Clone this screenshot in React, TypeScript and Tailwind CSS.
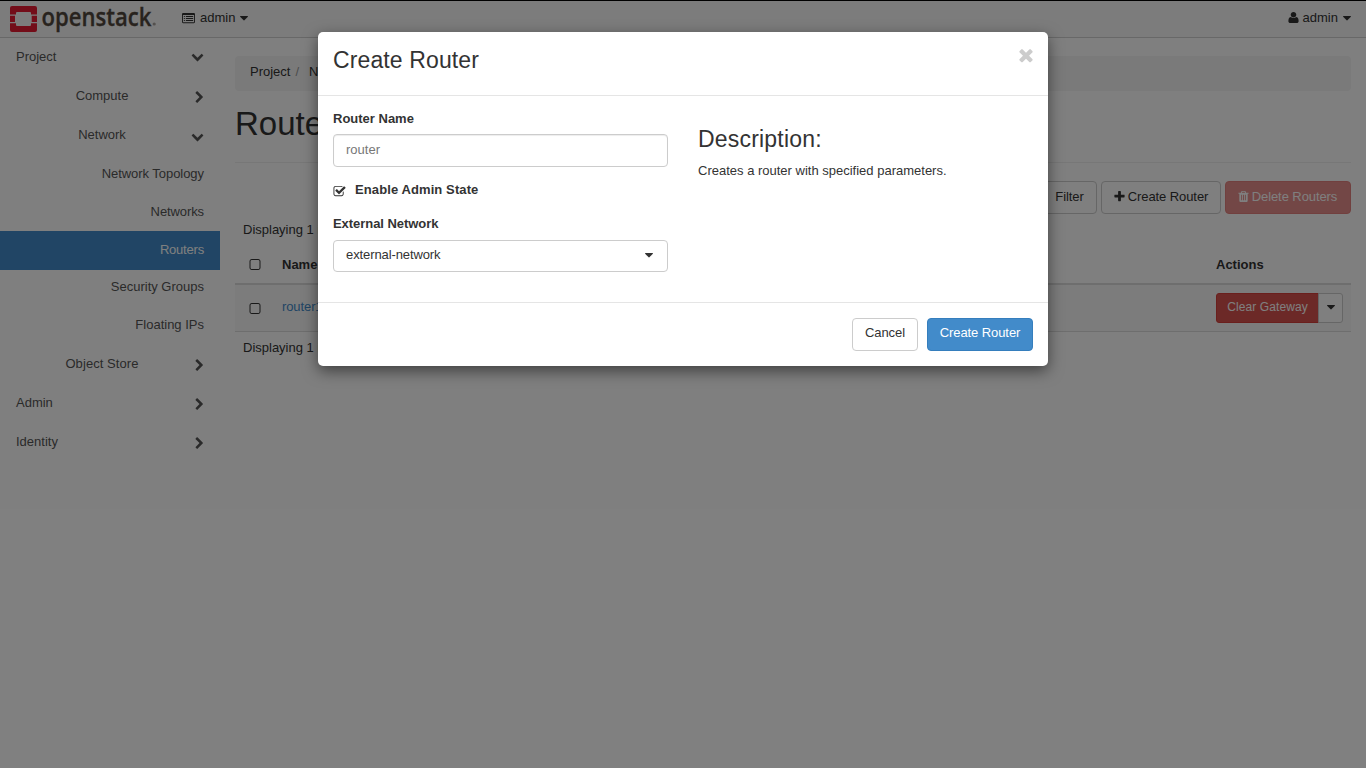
import React from "react";

const ICONS = {
  chevronDown:
    "M1683 808l-742 741q-19 19-45 19t-45-19l-742-741q-19-19-19-45.500t19-45.500l166-165q19-19 45-19t45 19l531 531 531-531q19-19 45-19t45 19l166 165q19 19 19 45.500t-19 45.500z",
  chevronRight:
    "M1363 877l-742 742q-19 19-45 19t-45-19l-166-166q-19-19-19-45t19-45l531-531-531-531q-19-19-19-45t19-45l166-166q19-19 45-19t45 19l742 742q19 19 19 45t-19 45z",
  times:
    "M1490 1322q0 40-28 68l-136 136q-28 28-68 28t-68-28l-294-294-294 294q-28 28-68 28t-68-28l-136-136q-28-28-28-68t28-68l294-294-294-294q-28-28-28-68t28-68l136-136q28-28 68-28t68 28l294 294 294-294q28-28 68-28t68 28l136 136q28 28 28 68t-28 68l-294 294 294 294q28 28 28 68z",
  plus: "M1600 736v192q0 40-28 68t-68 28h-416v416q0 40-28 68t-68 28h-192q-40 0-68-28t-28-68v-416h-416q-40 0-68-28t-28-68v-192q0-40 28-68t68-28h416v-416q0-40 28-68t68-28h192q40 0 68 28t28 68v416h416q40 0 68 28t28 68z",
  trash:
    "M704 1376v-704q0-14-9-23t-23-9h-64q-14 0-23 9t-9 23v704q0 14 9 23t23 9h64q14 0 23-9t9-23zm256 0v-704q0-14-9-23t-23-9h-64q-14 0-23 9t-9 23v704q0 14 9 23t23 9h64q14 0 23-9t9-23zm256 0v-704q0-14-9-23t-23-9h-64q-14 0-23 9t-9 23v704q0 14 9 23t23 9h64q14 0 23-9t9-23zm-544-992h448l-48-117q-7-9-17-11h-317q-10 2-17 11zm928 32v64q0 14-9 23t-23 9h-96v948q0 83-47 143.500t-113 60.500h-832q-66 0-113-58.500t-47-141.500v-952h-96q-14 0-23-9t-9-23v-64q0-14 9-23t23-9h309l70-167q15-37 54-63t79-26h320q40 0 79 26t54 63l70 167h309q14 0 23 9t9 23z",
  user: "M1600 1405q0 120-73 189.500t-194 69.500h-874q-121 0-194-69.500t-73-189.500q0-53 3.500-103.500t14-109 26.500-108.500 43-97.500 62-81 85.500-53.500 111.500-20q9 0 42 21.500t74.500 48 108 48 133.500 21.500 133.500-21.500 108-48 74.500-48 42-21.500q61 0 111.500 20t85.500 53.500 62 81 43 97.500 26.500 108.500 14 109 3.500 103.500zm-320-893q0 159-112.500 271.500t-271.500 112.500-271.500-112.500-112.500-271.500 112.500-271.500 271.500-112.500 271.500 112.500 112.500 271.500z",
  square:
    "M1312 256h-832q-66 0-113 47t-47 113v832q0 66 47 113t113 47h832q66 0 113-47t47-113v-832q0-66-47-113t-113-47zm288 160v832q0 119-84.500 203.500t-203.500 84.500h-832q-119 0-203.500-84.500t-84.500-203.500v-832q0-119 84.500-203.500t203.500-84.500h832q119 0 203.500 84.500t84.500 203.500z",
  checkSquare:
    "M1472 930v318q0 119-84.500 203.500t-203.500 84.500h-832q-119 0-203.500-84.500t-84.500-203.500v-832q0-119 84.500-203.500t203.500-84.500h832q63 0 117 25 15 7 18 23 3 17-9 29l-49 49q-10 10-23 10-3 0-9-2-23-6-45-6h-832q-66 0-113 47t-47 113v832q0 66 47 113t113 47h832q66 0 113-47t47-113v-254q0-13 9-22l64-64q10-10 23-10 6 0 12 3 20 8 20 29zm231-489l-814 814q-24 24-57 24t-57-24l-430-430q-24-24-24-57t24-57l110-110q24-24 57-24t57 24l263 263 647-647q24-24 57-24t57 24l110 110q24 24 24 57t-24 57z",
  caret:
    "M1408 704q0 26-19 45l-448 448q-19 19-45 19t-45-19l-448-448q-19-19-19-45t19-45 45-19h896q26 0 45 19t19 45z",
  list: "M160 128h1472a160 160 0 0 1 160 160v1088a160 160 0 0 1-160 160H160a160 160 0 0 1-160-160V288a160 160 0 0 1 160-160zM128 420v956q0 32 32 32h1472q32 0 32-32V420zM256 550h138v138H256zM532 550h1004v138H532zM256 826h138v138H256zM532 826h1004v138H532zM256 1102h138v138H256zM532 1102h1004v138H532z",
};

function Icon({ name, className }: { name: keyof typeof ICONS; className: string }) {
  return (
    <svg viewBox="0 0 1792 1792" fill="currentColor" fillRule="evenodd" className={`shrink-0 ${className}`}>
      <path d={ICONS[name]} />
    </svg>
  );
}

function Logo() {
  return (
    <svg width="152" height="34" viewBox="0 0 152 34" className="mt-[2px] ml-2 shrink-0">
      <path
        fill="#e61a33"
        d="M4 4h23a2 2 0 0 1 2 2V12.500h-6V11a1 1 0 0 0-1-1h-13a1 1 0 0 0-1 1v1.500H2V6A2 2 0 0 1 4 4zM2 13.700h5v6.300H2zM23.700 13.700H29v6.300h-5.300zM2 21.200h6v1.800a1 1 0 0 0 1 1h13a1 1 0 0 0 1-1v-1.800H29v6.800a2 2 0 0 1-2 2h-23A2 2 0 0 1 2 28z"
      />
      <text x="33.500" y="24" fill="#51473d" stroke="#51473d" strokeWidth="0.300" fontFamily="'Open Sans', 'Noto Sans', sans-serif" fontSize="25" fontWeight="600" textLength="110" lengthAdjust="spacingAndGlyphs">
        openstack
      </text>
      <circle cx="146.200" cy="22" r="1.600" fill="#a8a39e" />
    </svg>
  );
}

type NavRow = { label: string; row: string; level: 1 | 2 | 3; open?: boolean };

const NAV: NavRow[] = [
  { label: "Project", row: "h-[38px] [&_svg]:-mt-[2px] [&_svg]:mb-[2px]", level: 1, open: true },
  { label: "Compute", row: "h-[39px]", level: 2 },
  { label: "Network", row: "h-[39px]", level: 2, open: true },
  { label: "Network Topology", row: "h-[39px] tracking-[-0.05px]", level: 3 },
  { label: "Networks", row: "h-[38px] tracking-[-0.1px]", level: 3 },
  { label: "Routers", row: "h-[39px] bg-[#428bca] pb-[2px] tracking-[-0.2px] text-white", level: 3 },
  { label: "Security Groups", row: "h-[36px] pb-[2px]", level: 3 },
  { label: "Floating IPs", row: "h-[38px]", level: 3 },
  { label: "Object Store", row: "h-[39px] tracking-[0.07px]", level: 2 },
  { label: "Admin", row: "h-[39px]", level: 1 },
  { label: "Identity", row: "h-[39px]", level: 1 },
];

const LEVEL = { 1: "pl-4 text-left", 2: "pl-3 text-center", 3: "pr-4 text-right" };

function Sidebar() {
  return (
    <nav className="w-[220px] shrink-0 text-[#555]">
      {NAV.map((r) => (
        <a key={r.label} className={`flex items-center ${r.row}`}>
          <span className={`flex-1 ${LEVEL[r.level]}`}>{r.label}</span>
          {r.level < 3 && (
            <span className="mr-4 flex w-3 justify-end pt-[3px]">
              <Icon name={r.open ? "chevronDown" : "chevronRight"} className={r.open ? "size-[13px]" : "-mr-[2px] size-[13px]"} />
            </span>
          )}
        </a>
      ))}
    </nav>
  );
}

const BTN = "flex h-[33px] items-center justify-center rounded border whitespace-nowrap tracking-[-0.08px]";

function Main() {
  return (
    <main className="ml-[15px] w-[1116px] pt-[18px]">
      <ol className="flex h-[35px] items-center rounded bg-[#f5f5f5] px-[15px] pb-[3px]">
        <li>Project</li>
        <li className="px-[5px] text-[#999]">/</li>
        <li className="pl-[5px]">Network</li>
        <li className="px-[5px] text-[#999]">/</li>
        <li className="pl-[5px]">Routers</li>
      </ol>
      <h1 className="mt-[14px] h-[58px] border-b border-[#eee] text-[33px] leading-[38px]">Routers</h1>
      <div className="mt-[18px] flex justify-end gap-1">
        <button className={`${BTN} w-[54px] border-[#ccc] pr-px pb-[2px]`}>Filter</button>
        <button className={`${BTN} w-[120px] border-[#ccc] pr-px pb-[2px]`}>
          <Icon name="plus" className="mr-[2px] size-[13px]" />
          Create Router
        </button>
        <button className={`${BTN} w-[126px] border-[#d43f3a] bg-[#d9534f] pr-[2px] pb-[2px] text-white opacity-65`}>
          <Icon name="trash" className="mr-[2px] size-[13px]" />
          Delete Routers
        </button>
      </div>
      <div className="flex h-[32px] items-center px-2">Displaying 1 item</div>
      <div className="flex h-[39px] items-center border-b-2 border-[#ddd] font-bold">
        <Icon name="square" className="mt-px ml-[13px] size-[14px]" />
        <span className="ml-5 flex-1">Name</span>
        <span className="w-[135px]">Actions</span>
      </div>
      <div className="flex h-[47px] items-center border-b border-[#ddd] bg-[#f9f9f9]">
        <Icon name="square" className="mt-px ml-[13px] size-[14px]" />
        <span className="ml-5 flex-1 pb-[2px] tracking-[-0.1px] text-[#428bca]">router1</span>
        <div className="flex w-[135px]">
          <button className="h-[30px] w-[103px] rounded-l-[3px] border border-[#d43f3a] bg-[#d9534f] pb-[2px] text-xs tracking-[0.1px] text-white">
            Clear Gateway
          </button>
          <button className="-ml-px flex h-[30px] w-[25px] items-center justify-center rounded-r-[3px] border border-[#ccc] bg-white pb-[2px]">
            <Icon name="caret" className="size-[14px]" />
          </button>
        </div>
      </div>
      <div className="flex h-[32px] items-center px-2">Displaying 1 item</div>
    </main>
  );
}

function Modal() {
  return (
    <section className="h-[334px] w-[730px] rounded-[5px] bg-white shadow-[0_5px_15px_rgba(0,0,0,0.5)]">
      <header className="flex h-16 justify-between border-b border-[#e5e5e5] px-[15px]">
        <h4 className="pt-[13px] text-[23px] leading-[30px] tracking-[0.12px]">Create Router</h4>
        <Icon name="times" className="mt-[13px] -mr-[2.5px] size-[20px] text-[#ccc]" />
      </header>
      <div className="flex h-[206px] gap-[30px] px-[15px]">
        <form className="w-[335px]">
          <label className="block pt-[13px] leading-[19px] font-bold">Router Name</label>
          <input
            placeholder="router"
            className="mt-[6px] block h-[33px] w-full rounded border border-[#ccc] px-3 pb-[3px] shadow-[inset_0_1px_1px_rgba(0,0,0,0.075)] placeholder:text-[#777]"
          />
          <label className="mt-[14px] flex h-[18px] items-center font-bold tracking-[0.1px]">
            <Icon name="checkSquare" className="mt-[3px] mr-[9px] size-[13px]" />
            Enable Admin State
          </label>
          <label className="mt-[15px] block leading-[19px] font-bold tracking-[-0.05px]">External Network</label>
          <div className="mt-[7px] flex h-[32px] items-center justify-between rounded border border-[#ccc] pr-[11px] pb-[2px] pl-3 tracking-[-0.1px]">
            external-network
            <Icon name="caret" className="size-[14px]" />
          </div>
        </form>
        <div>
          <h3 className="pt-[29px] text-[23px] leading-[28px] tracking-[0.2px]">Description:</h3>
          <p className="mt-[9px] leading-[18px]">Creates a router with specified parameters.</p>
        </div>
      </div>
      <footer className="flex justify-end gap-[9px] border-t border-[#e5e5e5] px-[15px] pt-[15px]">
        <button className={`${BTN} w-[66px] border-[#ccc] pb-[3px]`}>Cancel</button>
        <button className={`${BTN} w-[106px] border-[#357ebd] bg-[#428bca] pb-[3px] text-white`}>Create Router</button>
      </footer>
    </section>
  );
}

export default function App() {
  return (
    <div className="relative h-[768px] w-[1366px] overflow-hidden bg-white font-['Liberation_Sans',Arial,sans-serif] text-[13px] leading-[18px] text-[#333]">
      <header className="flex h-[38px] items-center border-t border-b border-t-black border-b-[#d0d0d0] bg-[#f8f8f8] pb-[2px]">
        <Logo />
        <Icon name="list" className="ml-[22px] size-[13px]" />
        <span className="ml-[5px]">admin</span>
        <Icon name="caret" className="ml-[2px] size-[14px]" />
        <Icon name="user" className="mb-px ml-auto size-[13px]" />
        <span className="ml-[3px]">admin</span>
        <Icon name="caret" className="mr-[12px] ml-[2px] size-[14px]" />
      </header>
      <div className="flex">
        <Sidebar />
        <Main />
      </div>
      <div className="absolute inset-0 flex items-start justify-center bg-black/50 pt-8">
        <Modal />
      </div>
    </div>
  );
}
